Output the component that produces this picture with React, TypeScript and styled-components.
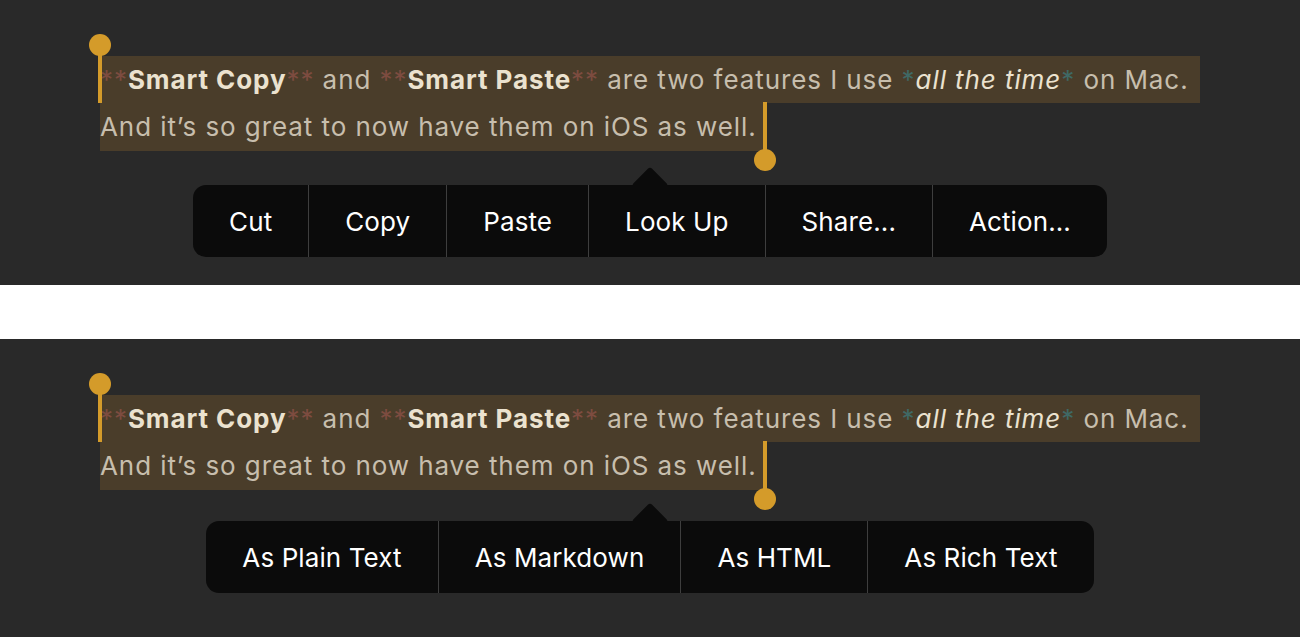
import React from "react"
import styled, { createGlobalStyle } from "styled-components"

const GlobalStyle = createGlobalStyle`
  html, body {
    margin: 0;
    padding: 0;
    background: #ffffff;
  }
  body {
    font-family: Inter, "Noto Sans", "Liberation Sans", sans-serif;
  }
`

const Page = styled.div`
  display: flex;
  flex-direction: column;
  width: 1300px;
`

const Panel = styled.section<{ $height: number; $gap: number }>`
  height: ${(p) => p.$height}px;
  background: #292929;
  box-sizing: border-box;
  padding: 56px 100px 0 100px;
  display: flex;
  flex-direction: column;
  gap: ${(p) => p.$gap}px;
`

const Spacer = styled.div`
  height: 54px;
  background: #ffffff;
`

const TextBlock = styled.div`
  display: flex;
  flex-direction: column;
  align-items: flex-start;
  font-size: 26px;
  line-height: 47px;
  letter-spacing: 0.92px;
  color: #c7bead;
  white-space: nowrap;
`

const Line = styled.div<{ $full?: boolean; $height: number }>`
  position: relative;
  height: ${(p) => p.$height}px;
  width: ${(p) => (p.$full ? "100%" : "auto")};
  padding-right: ${(p) => (p.$full ? 0 : 6)}px;
  background: #4a3d2a;
  box-sizing: border-box;
`

const Bold = styled.span`
  font-weight: 700;
  color: #ebe2cf;
`

const Italic = styled.span`
  font-style: italic;
  color: #ebe2cf;
`

const Marker = styled.span<{ $tone: "bold" | "italic" }>`
  color: ${(p) => (p.$tone === "bold" ? "#7d4c40" : "#3f6965")};
  font-weight: 400;
  font-style: normal;
`

const Handle = styled.div<{ $end?: boolean }>`
  position: absolute;
  width: 4px;
  height: 58px;
  background: #d49b2a;
  top: ${(p) => (p.$end ? "-1px" : "-11px")};
  ${(p) => (p.$end ? "right: -4px;" : "left: -2px;")}

  &::after {
    content: "";
    position: absolute;
    width: 22px;
    height: 22px;
    border-radius: 50%;
    background: #d49b2a;
    left: -9px;
    ${(p) => (p.$end ? "bottom: -11px;" : "top: -11px;")}
  }
`

const MenuRow = styled.div`
  position: relative;
  display: flex;
  justify-content: center;
  margin: 0 -100px;
`

const Arrow = styled.div`
  position: absolute;
  left: 50%;
  top: 0;
  width: 26px;
  height: 26px;
  margin-left: -13px;
  margin-top: -13px;
  background: #0b0b0b;
  border-radius: 3px;
  transform: rotate(45deg);
`

const Menu = styled.div`
  position: relative;
  display: flex;
  height: 72px;
  background: #0b0b0b;
  border-radius: 13px;
  overflow: hidden;
`

const MenuItem = styled.div`
  display: flex;
  align-items: center;
  padding: 0 36px;
  font-size: 26px;
  color: #ffffff;
  letter-spacing: 0.1px;
  & + & {
    border-left: 1px solid #3e3e3e;
  }
`

const Paragraph = () => (
  <TextBlock>
    <Line $full $height={47}>
      <Handle />
      <Marker $tone="bold">**</Marker>
      <Bold>Smart Copy</Bold>
      <Marker $tone="bold">**</Marker> and <Marker $tone="bold">**</Marker>
      <Bold>Smart Paste</Bold>
      <Marker $tone="bold">**</Marker> are two features I use{" "}
      <Marker $tone="italic">*</Marker>
      <Italic>all the time</Italic>
      <Marker $tone="italic">*</Marker> on Mac.
    </Line>
    <Line $height={48}>
      And it’s so great to now have them on iOS as well.
      <Handle $end />
    </Line>
  </TextBlock>
)

const EditPanel = ({ items, height, gap }: { items: string[]; height: number; gap: number }) => (
  <Panel $height={height} $gap={gap}>
    <Paragraph />
    <MenuRow>
      <Arrow />
      <Menu>
        {items.map((item) => (
          <MenuItem key={item}>{item}</MenuItem>
        ))}
      </Menu>
    </MenuRow>
  </Panel>
)

export default function App() {
  return (
    <Page>
      <GlobalStyle />
      <EditPanel height={285} gap={34} items={["Cut", "Copy", "Paste", "Look Up", "Share...", "Action..."]} />
      <Spacer />
      <EditPanel height={298} gap={31} items={["As Plain Text", "As Markdown", "As HTML", "As Rich Text"]} />
    </Page>
  )
}
